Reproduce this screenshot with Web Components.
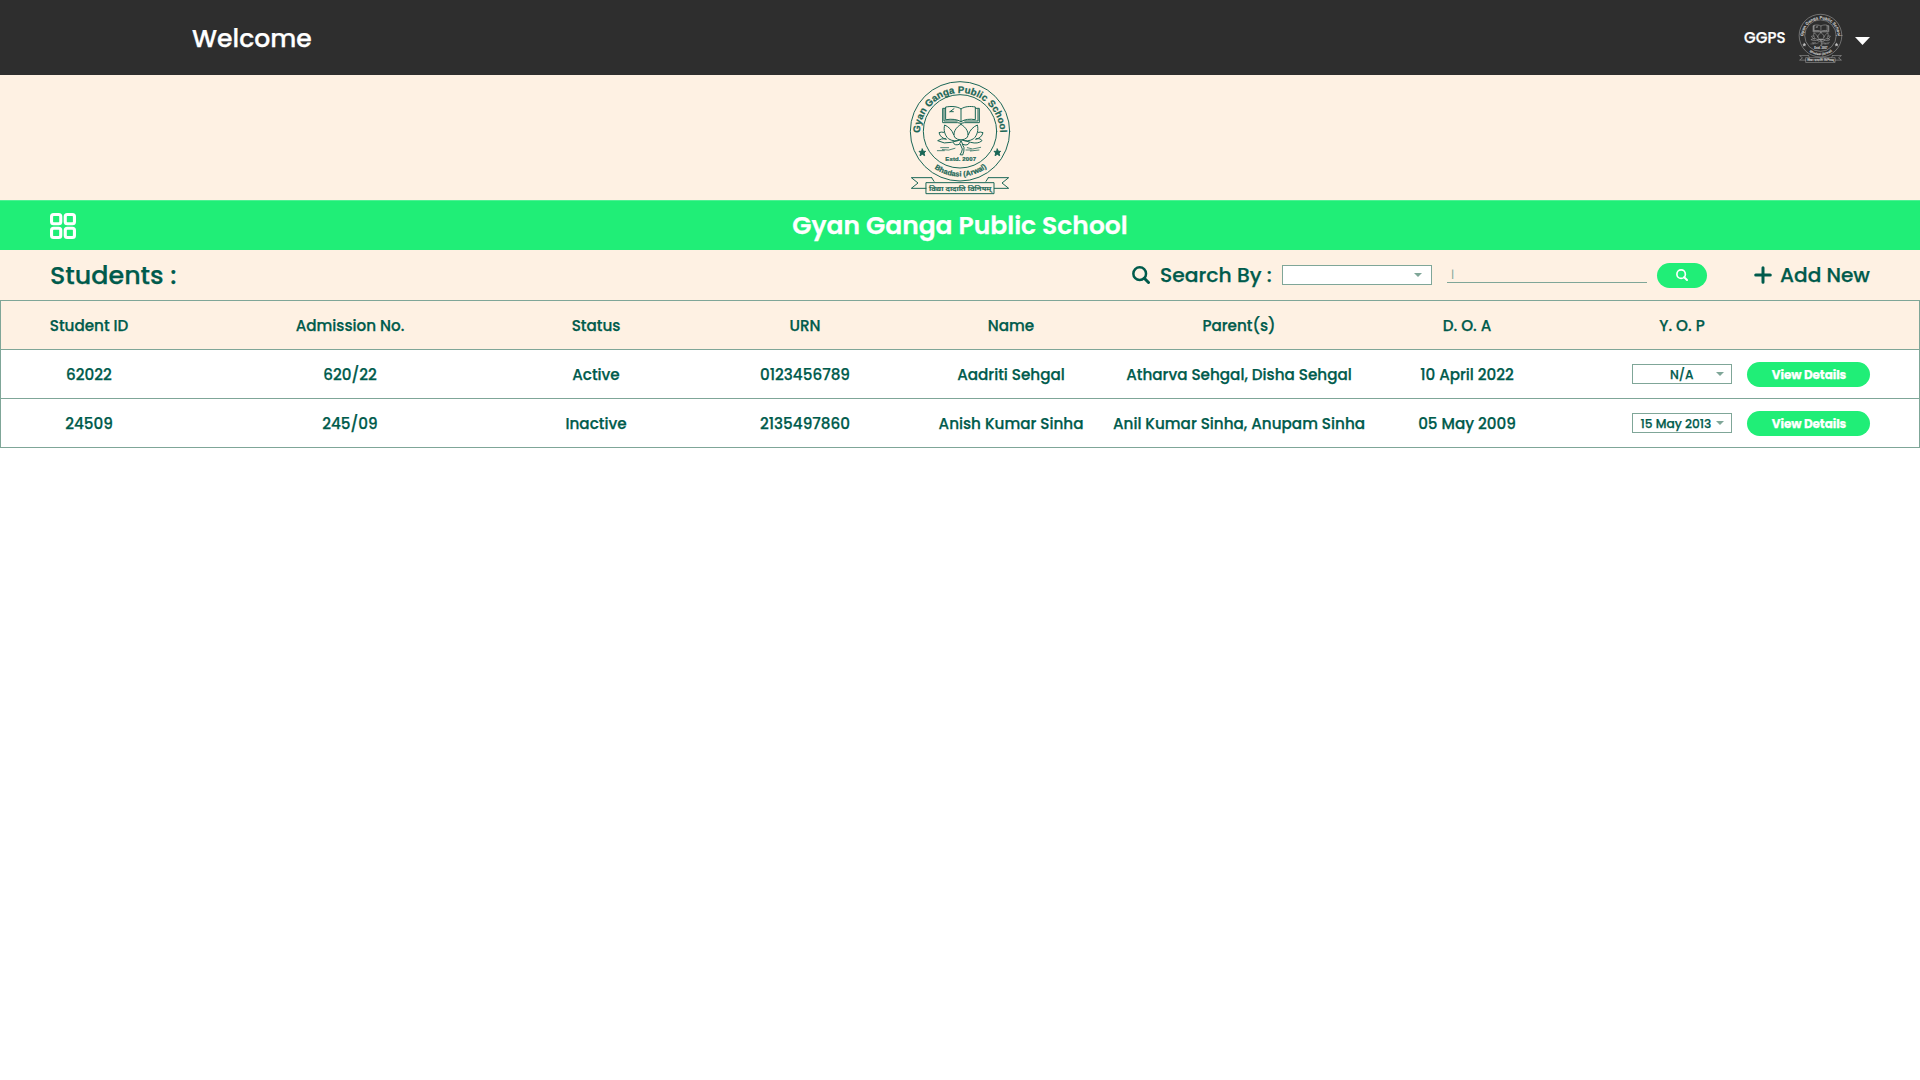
<!DOCTYPE html>
<html lang="en">
<head>
<meta charset="utf-8">
<title>Gyan Ganga Public School</title>
<style>
body{margin:0;background:#fff;font-family:Poppins,Inter,"Noto Sans",sans-serif;font-weight:500;color:#005b4c}
</style>
</head>
<body>
<school-page></school-page>
<script>
const define=(name,html)=>customElements.define(name,class extends HTMLElement{
  constructor(){super();this.attachShadow({mode:'open'});}
  connectedCallback(){this.shadowRoot.innerHTML=html;}
});

/* Single line label. */
define('text-label','<style>:host{display:block;flex:none;white-space:nowrap;line-height:1;-webkit-text-stroke:.25px currentColor}</style><slot></slot>');

define('school-crest',`<style>:host{display:block;flex:none;width:100px;height:114px}svg{display:block;width:100%;height:100%;overflow:visible}
text{font-family:"Liberation Sans",Arial,sans-serif;font-weight:700;fill:currentColor;stroke:currentColor;stroke-width:.7}</style>
<svg viewBox="30 32 300 342" fill="none" stroke="currentColor" stroke-width="var(--line,3)" stroke-linejoin="round" stroke-linecap="round">
<defs><path id="top" d="M60 188A120 120 0 1 1 300 188"/><path id="bot" d="M92 286A135 135 0 0 0 268 286"/></defs>
<circle cx="180" cy="183" r="149"/><circle cx="180" cy="183" r="110"/>
<text font-size="29"><textPath href="#top" textLength="376" lengthAdjust="spacing">Gyan Ganga Public School</textPath></text>
<text font-size="22"><textPath href="#bot" startOffset="14" textLength="168" lengthAdjust="spacing">Bhadasi (Arwal)</textPath></text>
<path d="M67 236l3 7h7l-5 5 2 8-7-4-7 4 2-8-5-5h7zM292 236l3 7h7l-5 5 2 8-7-4-7 4 2-8-5-5h7z" fill="currentColor"/>
<path d="M138 110C154 107 172 108 183 116C194 108 212 107 226 110V148C209 145 194 147 183 154C172 147 155 145 138 148ZM183 116V153M137 114H128V157H173Q183 161 193 157H238V114H227M132 116V152H172M234 116V152H194M150 124l12-9M150 124h10"/>
<path d="M183 162C166 172 158 188 164 201Q171 208 183 209Q195 208 202 201C208 188 200 172 183 162ZM161 193C157 180 146 169 134 164C130 178 134 195 145 205Q162 216 181 209M205 193C209 180 220 169 232 164C236 178 232 195 221 205Q204 216 185 209M132 186Q123 184 117 187Q121 203 139 207M234 186Q243 184 249 187Q245 203 227 207M137 205Q123 204 113 211Q132 222 154 216L176 210M229 205Q243 204 246 211Q234 222 212 216L190 210M160 217Q163 227 178 222L183 211L188 222Q204 228 208 217M181 222L187 236Q186 246 180 253L188 254Q193 242 192 232L187 222"/>
<path d="M122 232H146M112 241H133M127 238Q146 243 165 234M202 232L218 236L242 231M198 239H214M211 242L237 239" stroke-width="2.3"/>
<text x="136" y="273" font-size="18" textLength="92" lengthAdjust="spacing">Estd. 2007</text>
<path d="M79 337H282V370H79ZM95 322H34L54 338L34 354H78M265 322H326L306 338L326 354H283M95 322L102 333M265 322L258 333"/>
<text x="87" y="361" font-size="19" textLength="187" lengthAdjust="spacingAndGlyphs" style="font-family:'Noto Sans','Noto Sans Devanagari',sans-serif;font-weight:500">विद्या दादाति विनियम्</text>
</svg>`);

define('search-icon','<style>:host{display:block;flex:none;width:18px;height:18px}svg{display:block;width:100%;height:100%}</style><svg viewBox="0 0 18 18" fill="none" stroke="currentColor" stroke-width="2.5"><circle cx="7.7" cy="7.7" r="6.35"/><path d="M12.3 12.3L16.5 16.5" stroke-width="3" stroke-linecap="round"/></svg>');

define('drop-arrow','<style>:host{display:block;flex:none;width:8px;height:4px}svg{display:block;width:100%;height:100%}</style><svg viewBox="0 0 8 4" preserveAspectRatio="none"><path d="M0 0H8L4 4Z" fill="currentColor"/></svg>');

define('select-box',`<style>:host{display:flex;box-sizing:border-box;flex:none;width:100px;height:20px;border:1px solid #7fa698;background:#fff;font-size:12.2px;align-items:center;justify-content:space-between;padding:1px 7px 0 7.5px}
::slotted(text-label){margin-top:1px}drop-arrow{color:#7fa698;margin-top:-2px}</style><slot></slot><drop-arrow></drop-arrow>`);

define('pill-button','<style>:host{display:flex;flex:none;align-items:center;justify-content:center;width:123px;height:25px;border-radius:13px;background:#20ee77;color:#fff;font-size:12px;font-weight:700;letter-spacing:-.1px}::slotted(text-label){margin:1px 0 0 1px}</style><slot></slot>');

define('top-bar',`<style>:host{display:flex;height:75px;background:#2e2e2e;color:#fff;align-items:center;padding:0 50px 0 192px}
.w{font-size:25.1px;margin-top:2px}.user{display:flex;align-items:center;margin-left:auto}
.n{font-size:15.1px;margin:.3px 13.5px 0 0}school-crest{width:43px;height:49px;color:#cacaca;--line:3;margin:1.5px 13px 0 0}
drop-arrow{width:15px;height:8px;margin-top:7px}</style>
<text-label class="w">Welcome</text-label><div class="user"><text-label class="n">GGPS</text-label><school-crest></school-crest><drop-arrow></drop-arrow></div>`);

define('crest-banner','<style>:host{display:flex;height:125px;box-sizing:border-box;background:#fef1e3;justify-content:center;padding-top:5.6px}school-crest{color:#1a6656}</style><school-crest></school-crest>');

define('title-bar',`<style>:host{display:grid;grid-template-columns:1fr auto 1fr;align-items:center;height:50px;box-sizing:border-box;background:#20ee77;border-top:1px solid #4df193;color:#fff;padding:0 50px}
svg{width:26px;height:26px;display:block}text-label{font-size:25px;font-weight:600}</style>
<svg viewBox="0 0 26 26" fill="none" stroke="#fff" stroke-width="3.1"><rect x="1.55" y="1.55" width="9.2" height="9.2" rx="2"/><rect x="15.25" y="1.55" width="9.2" height="9.2" rx="2"/><rect x="1.55" y="15.25" width="9.2" height="9.2" rx="2"/><rect x="15.25" y="15.25" width="9.2" height="9.2" rx="2"/></svg>
<text-label>Gyan Ganga Public School</text-label><span></span>`);

define('tool-bar',`<style>:host{display:flex;align-items:center;height:50px;background:#fef1e3;padding:0 50px;font-size:20.3px}
.h{font-size:25.4px;margin-top:.5px}.tools{display:flex;align-items:center;margin-left:auto}
.s{width:111px;margin:.4px 11px 0 10px}select-box{width:150px;padding-right:9px;justify-content:flex-end}
.field{box-sizing:border-box;width:200px;height:18px;border-bottom:1px solid #7fa698;margin:-2px 10px 0 15px;padding-left:4px;font-size:11px;line-height:18px;font-weight:400;color:#7fa698}
pill-button{width:50px}pill-button search-icon{width:12px;height:12px}
.plus{width:18px;height:18px;margin:0 8.5px 0 46.5px}.a{width:90px;font-size:20.1px;margin-top:.4px}</style>
<text-label class="h">Students :</text-label>
<div class="tools"><search-icon></search-icon><text-label class="s">Search By :</text-label><select-box></select-box><div class="field">|</div><pill-button><search-icon></search-icon></pill-button>
<svg class="plus" viewBox="0 0 18 18" stroke="currentColor" stroke-width="3" stroke-linecap="round"><path d="M9 1.7V16.3M1.7 9H16.3"/></svg><text-label class="a">Add New</text-label></div>`);

define('table-row',`<style>:host{display:grid;grid-template-columns:176px 346px 146px 272px 140px 316px 140px 95px 100px 15px 123px;align-items:center;height:48px;border-bottom:1px solid #7fa698;font-size:15.2px}
:host([head]){background:#fef1e3}
::slotted(*){justify-self:center}::slotted(text-label){margin-top:1.4px}
::slotted(:nth-child(8)){grid-column:9}::slotted(:nth-child(9)){grid-column:11}</style><slot></slot>`);

const cells=list=>list.map(t=>`<text-label>${t}</text-label>`).join('');
const view='<pill-button><text-label>View Details</text-label></pill-button>';
define('students-table',`<style>:host{display:block;border:1px solid #7fa698;border-bottom:0}.na{margin-left:29.5px}</style>
<table-row head>${cells(['Student ID','Admission No.','Status','URN','Name','Parent(s)','D. O. A','Y. O. P'])}</table-row>
<table-row>${cells(['62022','620/22','Active','0123456789','Aadriti Sehgal','Atharva Sehgal, Disha Sehgal','10 April 2022'])}<select-box><text-label class="na">N/A</text-label></select-box>${view}</table-row>
<table-row>${cells(['24509','245/09','Inactive','2135497860','Anish Kumar Sinha','Anil Kumar Sinha, Anupam Sinha','05 May 2009'])}<select-box><text-label>15 May 2013</text-label></select-box>${view}</table-row>`);

define('school-page','<style>:host{display:flex;flex-direction:column;min-height:100vh;background:#fff}</style><top-bar></top-bar><crest-banner></crest-banner><title-bar></title-bar><tool-bar></tool-bar><students-table></students-table>');
</script>
</body>
</html>
